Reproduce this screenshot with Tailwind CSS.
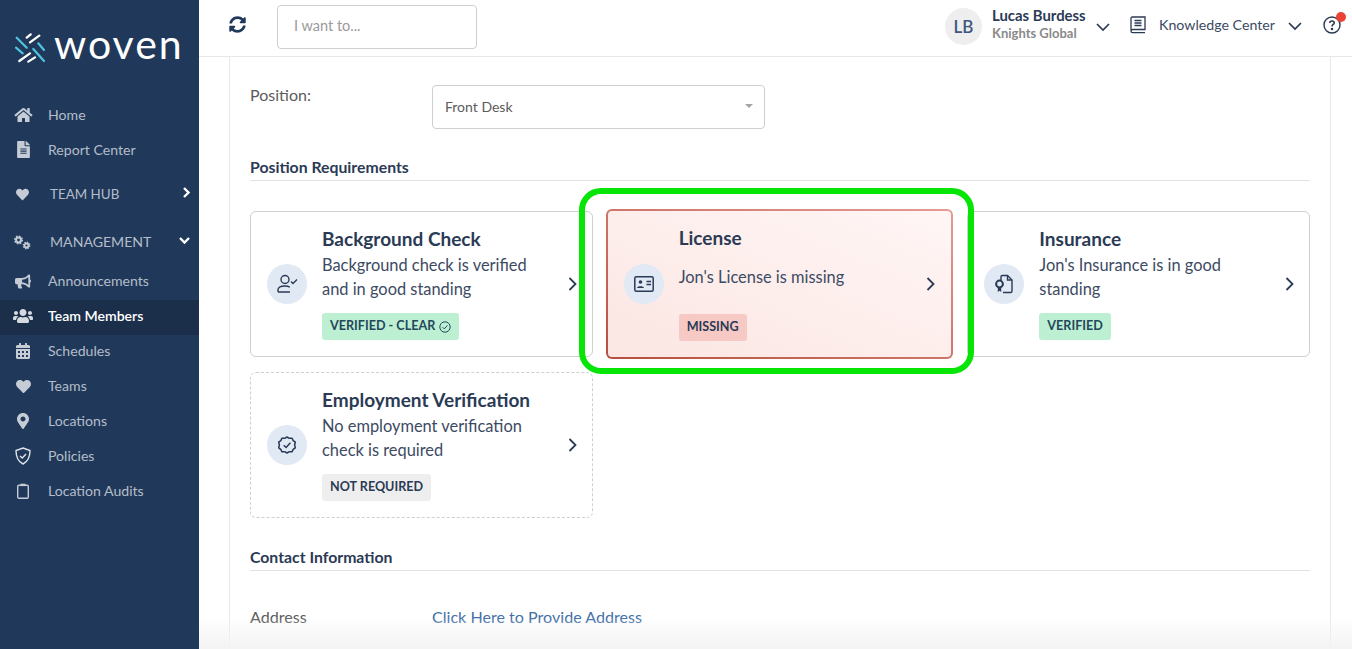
<!DOCTYPE html>
<html lang="en">
<head>
  <meta charset="utf-8"/>
  <meta name="viewport" content="width=device-width, initial-scale=1.0"/>
  <title>Team Member</title>
  <script src="https://cdn.jsdelivr.net/npm/@tailwindcss/browser@4"></script>
</head>
<body class="h-screen overflow-hidden bg-white font-['Lato','Noto_Sans',sans-serif] text-[#2b3a55]">
<div class="relative flex h-[649px] overflow-hidden">

  <!-- Sidebar -->
  <aside class="w-[199px] shrink-0 bg-[#20395a] text-[14.1px] text-[#b4bdca]">
    <div class="flex h-[97px] items-start pl-[15px] pt-[33px]">
      <svg class="h-[30px] w-[30px] shrink-0" viewBox="0 0 30 30" fill="none" stroke-width="2.2" stroke-linecap="round">
        <path d="M1.7 4.7 L11.7 14.7 M1 14.7 L7.7 20.3 M18.3 16 L29 28 M23.3 10.3 L29 17" stroke="#4fc3e0"/>
        <path d="M11.7 4.7 L15.7 1.3 M15 9.3 L24.3 2.7 M4.3 28 L15 20.3 M13.3 28.7 L20 24.3" stroke="#ffffff"/>
      </svg>
      <span class="ml-[9px] mt-[-8px] text-[41px] font-normal leading-[38px] tracking-[2px] text-white">woven</span>
    </div>
    <nav>
      <a class="flex h-[35px] items-center pl-[14px]"><svg class="h-[16px] w-[19px]" viewBox="0 0 576 512" fill="#c5ccd6"><path d="M280.37 148.26L96 300.11V464a16 16 0 0 0 16 16l112.06-.29a16 16 0 0 0 15.92-16V368a16 16 0 0 1 16-16h64a16 16 0 0 1 16 16v95.64a16 16 0 0 0 16 16.05L464 480a16 16 0 0 0 16-16V300L295.67 148.26a12.19 12.19 0 0 0-15.3 0zM571.6 251.47L488 182.56V44.05a12 12 0 0 0-12-12h-56a12 12 0 0 0-12 12v72.61L318.47 43a48 48 0 0 0-61 0L4.34 251.47a12 12 0 0 0-1.6 16.9l25.5 31A12 12 0 0 0 45.15 301l235.22-193.74a12.19 12.19 0 0 1 15.3 0L530.9 301a12 12 0 0 0 16.9-1.6l25.5-31a12 12 0 0 0-1.7-16.93z"/></svg><span class="ml-[15px]">Home</span></a>
      <a class="flex h-[35px] items-center pl-[17px]"><svg class="h-[17px] w-[13px]" viewBox="0 0 384 512" fill="#c5ccd6"><path d="M224 136V0H24C10.7 0 0 10.7 0 24v464c0 13.3 10.7 24 24 24h336c13.3 0 24-10.7 24-24V160H248c-13.2 0-24-10.8-24-24zm64 236c0 6.6-5.4 12-12 12H108c-6.6 0-12-5.4-12-12v-8c0-6.6 5.4-12 12-12h168c6.6 0 12 5.4 12 12v8zm0-64c0 6.6-5.4 12-12 12H108c-6.6 0-12-5.4-12-12v-8c0-6.6 5.4-12 12-12h168c6.6 0 12 5.4 12 12v8zm0-72v8c0 6.6-5.4 12-12 12H108c-6.6 0-12-5.4-12-12v-8c0-6.6 5.4-12 12-12h168c6.6 0 12 5.4 12 12zm96-114.1v6.1H256V0h6.1c6.4 0 12.5 2.5 17 7l97.9 98c4.5 4.5 7 10.6 7 16.9z"/></svg><span class="ml-[18px]">Report Center</span></a>

      <a class="mt-[3px] flex h-[48px] items-center pl-[15px] pr-[8px]"><svg class="h-[13px] w-[15px]" viewBox="0 0 512 512" fill="#c5ccd6"><path d="M462.3 62.6C407.5 15.9 326 24.3 275.7 76.2L256 96.5l-19.7-20.3C186.1 24.3 104.5 15.9 49.7 62.6c-62.8 53.6-66.1 149.8-9.9 207.9l193.5 199.8c12.5 12.9 32.8 12.9 45.3 0l193.5-199.8c56.3-58.1 53-154.3-9.8-207.9z"/></svg><span class="ml-[20px] text-[13.4px]">TEAM HUB</span><svg class="ml-auto mt-[-4px] h-[11px] w-[9px]" viewBox="0 0 9 11" fill="none" stroke="#ffffff" stroke-width="2.4"><path d="M2 1 L6.5 5.5 L2 10"/></svg></a>
      <a class="flex h-[48px] items-center pl-[13px] pr-[9px]"><svg class="h-[15px] w-[18px]" viewBox="0 0 18 15" fill="none" stroke="#c5ccd6"><circle cx="5.5" cy="5" r="2.4" stroke-width="2"/><circle cx="5.5" cy="5" r="3.7" stroke-width="1.6" stroke-dasharray="1.6 1.3"/><circle cx="13.5" cy="10.5" r="2" stroke-width="1.8"/><circle cx="13.5" cy="10.5" r="3.2" stroke-width="1.4" stroke-dasharray="1.4 1.1"/></svg><span class="ml-[19px]">MANAGEMENT</span><svg class="ml-auto mt-[-4px] h-[9px] w-[11px]" viewBox="0 0 11 9" fill="none" stroke="#ffffff" stroke-width="2.4"><path d="M1 2 L5.5 6.5 L10 2"/></svg></a>

      <a class="mt-[-1px] flex h-[35px] items-center pb-[3px] pl-[15px]"><svg class="h-[15px] w-[16px]" viewBox="0 0 576 512" fill="#c5ccd6"><path d="M576 240c0-23.63-12.95-44.04-32-55.12V32.01C544 23.26 537.02 0 512 0c-7.12 0-14.19 2.38-19.98 7.02l-85.03 68.03C364.28 109.19 310.66 128 256 128H64c-35.35 0-64 28.65-64 64v96c0 35.35 28.65 64 64 64h33.7c-1.39 10.48-2.18 21.14-2.18 32 0 39.77 9.26 77.35 25.56 110.94 5.19 10.69 16.52 17.06 28.4 17.06h74.28c26.05 0 41.69-29.84 25.9-50.56-16.4-21.52-26.15-48.36-26.15-77.44 0-11.11 1.62-21.79 4.41-32H256c54.66 0 108.28 18.81 150.98 52.95l85.03 68.03a32.023 32.023 0 0 0 19.98 7.02c24.92 0 32-22.78 32-32V295.13C563.05 284.04 576 263.63 576 240zm-96 141.42l-33.05-26.44C392.95 311.78 325.12 288 256 288v-96c69.12 0 136.95-23.78 190.95-66.98L480 98.58v282.84z"/></svg><span class="ml-[17px]">Announcements</span></a>
      <a class="flex h-[35px] items-center bg-[#1b2f4b] pb-[3px] pl-[13px] font-semibold text-white"><svg class="h-[16px] w-[20px]" viewBox="0 0 640 512" fill="#d5dae1"><path d="M96 224c35.3 0 64-28.7 64-64s-28.7-64-64-64-64 28.7-64 64 28.7 64 64 64zm448 0c35.3 0 64-28.7 64-64s-28.7-64-64-64-64 28.7-64 64 28.7 64 64 64zm32 32h-64c-17.6 0-33.5 7.1-45.1 18.6 40.3 22.1 68.9 62 75.1 109.4h66c17.7 0 32-14.3 32-32v-32c0-35.3-28.7-64-64-64zm-256 0c61.9 0 112-50.1 112-112S381.9 32 320 32 208 82.1 208 144s50.1 112 112 112zm76.8 32h-8.3c-20.8 10-43.9 16-68.5 16s-47.6-6-68.5-16h-8.3C179.6 288 128 339.6 128 403.2V432c0 26.5 21.5 48 48 48h288c26.5 0 48-21.5 48-48v-28.8c0-63.6-51.6-115.2-115.2-115.2zm-223.7-13.4C161.5 263.1 145.6 256 128 256H64c-35.3 0-64 28.7-64 64v32c0 17.7 14.3 32 32 32h65.9c6.3-47.4 34.9-87.3 75.2-109.4z"/></svg><span class="ml-[15px]">Team Members</span></a>
      <a class="flex h-[35px] items-center pb-[3px] pl-[16px]"><svg class="h-[16px] w-[14px]" viewBox="0 0 448 512" fill="#c5ccd6"><path d="M0 464c0 26.5 21.5 48 48 48h352c26.5 0 48-21.5 48-48V192H0v272zm320-196c0-6.6 5.4-12 12-12h40c6.6 0 12 5.4 12 12v40c0 6.6-5.4 12-12 12h-40c-6.6 0-12-5.4-12-12v-40zm0 128c0-6.6 5.4-12 12-12h40c6.6 0 12 5.4 12 12v40c0 6.6-5.4 12-12 12h-40c-6.6 0-12-5.4-12-12v-40zM192 268c0-6.6 5.4-12 12-12h40c6.6 0 12 5.4 12 12v40c0 6.6-5.4 12-12 12h-40c-6.6 0-12-5.4-12-12v-40zm0 128c0-6.6 5.4-12 12-12h40c6.6 0 12 5.4 12 12v40c0 6.6-5.4 12-12 12h-40c-6.6 0-12-5.4-12-12v-40zM64 268c0-6.6 5.4-12 12-12h40c6.6 0 12 5.4 12 12v40c0 6.6-5.4 12-12 12H76c-6.6 0-12-5.4-12-12v-40zm0 128c0-6.6 5.4-12 12-12h40c6.6 0 12 5.4 12 12v40c0 6.6-5.4 12-12 12H76c-6.6 0-12-5.4-12-12v-40zM400 64h-48V16c0-8.8-7.2-16-16-16h-32c-8.8 0-16 7.2-16 16v48H160V16c0-8.8-7.2-16-16-16h-32c-8.8 0-16 7.2-16 16v48H48C21.5 64 0 85.5 0 112v48h448v-48c0-26.5-21.5-48-48-48z"/></svg><span class="ml-[18px]">Schedules</span></a>
      <a class="flex h-[35px] items-center pb-[3px] pl-[15px]"><svg class="h-[15px] w-[17px]" viewBox="0 0 512 512" fill="#c5ccd6"><path d="M462.3 62.6C407.5 15.9 326 24.3 275.7 76.2L256 96.5l-19.7-20.3C186.1 24.3 104.5 15.9 49.7 62.6c-62.8 53.6-66.1 149.8-9.9 207.9l193.5 199.8c12.5 12.9 32.8 12.9 45.3 0l193.5-199.8c56.3-58.1 53-154.3-9.8-207.9z"/></svg><span class="ml-[16px]">Teams</span></a>
      <a class="flex h-[35px] items-center pb-[3px] pl-[17px]"><svg class="h-[16px] w-[12px]" viewBox="0 0 384 512" fill="#c5ccd6"><path d="M172.268 501.67C26.97 291.031 0 269.413 0 192 0 85.961 85.961 0 192 0s192 85.961 192 192c0 77.413-26.97 99.031-172.268 309.67-9.535 13.774-29.93 13.773-39.464 0zM192 272c44.183 0 80-35.817 80-80s-35.817-80-80-80-80 35.817-80 80 35.817 80 80 80z"/></svg><span class="ml-[19px]">Locations</span></a>
      <a class="flex h-[35px] items-center pb-[3px] pl-[15px]"><svg class="h-[18px] w-[16px]" viewBox="0 0 16 18" fill="none" stroke="#dfe3e8" stroke-width="1.4"><path d="M8 1 L15 3.5 C15 9 13 14.5 8 17 C3 14.5 1 9 1 3.5 Z"/><path d="M5 9 L7.3 11 L11 7"/></svg><span class="ml-[17px]">Policies</span></a>
      <a class="flex h-[35px] items-center pb-[3px] pl-[17px]"><svg class="h-[16px] w-[12px]" viewBox="0 0 12 16" fill="none" stroke="#c5ccd6" stroke-width="1.4"><rect x="0.7" y="2.2" width="10.6" height="13" rx="1.2"/><rect x="3.5" y="0.7" width="5" height="2.4" fill="#c5ccd6" stroke="none"/></svg><span class="ml-[19px]">Location Audits</span></a>
    </nav>
  </aside>

  <div class="flex min-w-0 flex-1 flex-col">
    <!-- Top bar -->
    <header class="flex h-[57px] shrink-0 items-start border-b border-[#e8e8e8] bg-white">
      <svg class="ml-[30px] mt-[16px] h-[17px] w-[17px]" viewBox="0 0 512 512" fill="#20395a"><path d="M370.72 133.28C339.458 104.008 298.888 87.962 255.848 88c-77.458.068-144.328 53.178-162.791 126.85-1.344 5.363-6.122 9.15-11.651 9.15H24.103c-7.498 0-13.194-6.807-11.807-14.176C33.933 94.924 134.813 8 256 8c66.448 0 126.791 26.136 171.315 68.685L463.03 40.97C478.149 25.851 504 36.559 504 57.941V192c0 13.255-10.745 24-24 24H345.941c-21.382 0-32.09-25.851-16.971-40.971l41.75-41.749zM32 296h134.059c21.382 0 32.09 25.851 16.971 40.971l-41.75 41.75c31.262 29.273 71.835 45.319 114.876 45.28 77.418-.07 144.315-53.144 162.787-126.849 1.344-5.363 6.122-9.15 11.651-9.15h57.304c7.498 0 13.194 6.807 11.807 14.176C478.067 417.076 377.187 504 256 504c-66.448 0-126.791-26.136-171.315-68.685L48.97 471.03C33.851 486.149 8 475.441 8 454.059V320c0-13.255 10.745-24 24-24z"/></svg>
      <div class="ml-[31px] mt-[5px] flex h-[44px] w-[200px] items-center rounded-[4px] border border-[#cfcfcf] pb-[2px] pl-[16px] text-[14.5px] text-[#9a9a9a]">I want to...</div>

      <div class="ml-[468px] mt-[8px] flex h-[37px] w-[37px] items-center justify-center rounded-full bg-[#eeeeee] text-[17px] font-semibold text-[#3f5680]">LB</div>
      <div class="ml-[10px] mt-[8px] w-[96px] leading-none">
        <div class="whitespace-nowrap text-[14.9px] font-bold text-[#2b3a55]">Lucas Burdess</div>
        <div class="mt-[4px] text-[13px] font-bold text-[#8a8a8a]">Knights Global</div>
      </div>
      <svg class="ml-[8px] mt-[22px] h-[10px] w-[14px]" viewBox="0 0 14 10" fill="none" stroke="#2b3a55" stroke-width="1.7"><path d="M1 2 L7 8 L13 2"/></svg>
      <svg class="ml-[20px] mt-[16px] h-[18px] w-[16px]" viewBox="0 0 16 18" fill="none" stroke="#2b3a55" stroke-width="1.3"><path d="M1 15 V2.2 C1 1.5 1.5 1 2.2 1 H15 V13.5 H2.6 C1.7 13.5 1 14.2 1 15 C1 15.9 1.7 16.7 2.6 16.7 H15"/><path d="M4.5 4.5 H11.5 M4.5 7 H11.5 M4.5 9.5 H11.5"/></svg>
      <span class="ml-[13px] mt-[16px] whitespace-nowrap text-[14.2px] leading-[18px] text-[#3c4a63]">Knowledge Center</span>
      <svg class="ml-[13px] mt-[21px] h-[10px] w-[14px]" viewBox="0 0 14 10" fill="none" stroke="#2b3a55" stroke-width="1.7"><path d="M1 2 L7 8 L13 2"/></svg>
      <div class="relative ml-[21px] mt-[16px] h-[18px] w-[18px]">
        <svg class="h-[18px] w-[18px]" viewBox="0 0 18 18" fill="none" stroke="#2b3a55" stroke-width="1.4"><circle cx="9" cy="9" r="8"/><path d="M6.8 7 C6.8 5.6 7.8 5 9 5 C10.3 5 11.2 5.8 11.2 6.9 C11.2 8.5 9 8.5 9 10.4" stroke-width="1.6"/><circle cx="9" cy="13" r="0.6" fill="#2b3a55"/></svg>
        <span class="absolute right-[-5px] top-[-4px] h-[10px] w-[10px] rounded-full bg-[#ea4335]"></span>
      </div>
    </header>

    <!-- Panel -->
    <main class="ml-[30px] w-[1102px] flex-1 overflow-hidden border-x border-[#e8e8e8] px-[20px] pt-[28px]">
      <div class="flex items-start">
        <label class="w-[182px] text-[16px] leading-[20px] text-[#5b5b5b]">Position:</label>
        <div class="flex h-[44px] w-[333px] items-center rounded-[4px] border border-[#cfcfcf] pb-[2px] pl-[12px] pr-[11px] text-[14px] text-[#5b5b5b]">
          Front Desk
          <span class="ml-auto h-0 w-0 border-x-[4px] border-t-[4px] border-x-transparent border-t-[#a5a5a5]"></span>
        </div>
      </div>

      <h2 class="mt-[30px] h-[22px] border-b border-[#e3e3e3] text-[15.8px] font-bold leading-[16px] text-[#2b3a55]">Position Requirements</h2>

      <div class="mt-[30px] grid grid-cols-3 gap-x-[16px] gap-y-[15px]">
        <div class="flex h-[146px] items-center rounded-[6px] border border-[#cfcfcf] pl-[16px] pr-[15px]">
          <span class="flex h-[40px] w-[40px] shrink-0 items-center justify-center rounded-full bg-[#e1e9f5]">
            <svg class="h-[22px] w-[22px]" viewBox="0 0 22 22" fill="none" stroke="#2b3a55" stroke-width="1.4"><circle cx="9" cy="6.5" r="4"/><path d="M2 19 V17 C2 14.5 5 13 9 13 C11 13 12.5 13.4 13.8 14.2 M2 19 H14"/><path d="M15 8.5 L17 10.5 L21 6.5"/></svg>
          </span>
          <div class="ml-[15px] min-w-0 flex-1">
            <h3 class="text-[19px] font-bold leading-[22px]">Background Check</h3>
            <p class="mt-[3px] max-w-[225px] text-[16.4px] leading-[23.5px] text-[#3c4a63]">Background check is verified and in good standing</p>
            <span class="mt-[13px] inline-flex h-[27px] items-center gap-[4px] rounded-[3px] bg-[#bdf0d3] px-[8px] text-[12.6px] font-bold text-[#24475a]">VERIFIED - CLEAR <svg class="h-[12px] w-[12px]" viewBox="0 0 12 12" fill="none" stroke="#24475a" stroke-width="1"><circle cx="6" cy="6" r="5.2"/><path d="M3.6 6.2 L5.3 7.9 L8.4 4.4"/></svg></span>
          </div>
          <svg class="ml-[10px] h-[14px] w-[9px] shrink-0" viewBox="0 0 9 14" fill="none" stroke="#2b3a55" stroke-width="1.8"><path d="M1.5 1 L7.5 7 L1.5 13"/></svg>
        </div>

        <div class="my-[-2px] ml-[-3px] mr-[-2px] h-[150px] rounded-[6px] bg-linear-to-tr from-[#b54f42] to-[#e59c92] p-[2px]">
          <div class="flex h-full items-center rounded-[4px] bg-linear-to-tr from-[#fbe6e3] to-[#fff6f5] pl-[16px] pr-[16px]">
            <span class="flex h-[40px] w-[40px] shrink-0 items-center justify-center rounded-full bg-[#e1e9f5]">
              <svg class="h-[16px] w-[20px]" viewBox="0 0 20 16" fill="none" stroke="#2b3a55" stroke-width="1.5"><rect x="0.8" y="0.8" width="18.4" height="14.4" rx="1.5"/><circle cx="6.5" cy="6" r="1.8" fill="#2b3a55" stroke="none"/><path d="M3 12 C3 9.8 10 9.8 10 12 Z" fill="#2b3a55" stroke="none"/><path d="M12.5 5.5 H17 M12.5 8.5 H17" stroke-width="1.3"/></svg>
            </span>
            <div class="ml-[15px] flex h-full min-w-0 flex-1 flex-col pb-[16px] pt-[16px]">
              <h3 class="text-[19px] font-bold leading-[22px]">License</h3>
              <p class="mt-[16px] text-[16.4px] leading-[23.5px] text-[#3c4a63]">Jon's License is missing</p>
              <span class="mt-auto inline-flex h-[27px] w-fit items-center rounded-[3px] bg-[#f6c9c4] px-[8px] text-[12.6px] font-bold">MISSING</span>
            </div>
            <svg class="ml-[10px] h-[14px] w-[9px] shrink-0" viewBox="0 0 9 14" fill="none" stroke="#2b3a55" stroke-width="1.8"><path d="M1.5 1 L7.5 7 L1.5 13"/></svg>
          </div>
        </div>

        <div class="flex h-[146px] items-center rounded-[6px] border border-[#cfcfcf] pl-[16px] pr-[15px]">
          <span class="flex h-[40px] w-[40px] shrink-0 items-center justify-center rounded-full bg-[#e1e9f5]">
            <svg class="h-[20px] w-[20px]" viewBox="0 0 20 20" fill="none" stroke="#2b3a55" stroke-width="1.4"><path d="M7 6 V2.8 C7 2 7.6 1.5 8.3 1.5 H13.5 L18 6 V17 C18 17.8 17.4 18.5 16.6 18.5 H9"/><path d="M13.5 1.5 V6 H18"/><circle cx="5.5" cy="10" r="3.4" stroke-width="2"/><path d="M3.8 13 V18 L5.5 16.8 L7.2 18 V13" fill="#2b3a55" stroke="none"/></svg>
          </span>
          <div class="ml-[15px] min-w-0 flex-1">
            <h3 class="text-[19px] font-bold leading-[22px]">Insurance</h3>
            <p class="mt-[3px] text-[16.4px] leading-[23.5px] text-[#3c4a63]">Jon's Insurance is in good standing</p>
            <span class="mt-[13px] inline-flex h-[27px] items-center rounded-[3px] bg-[#bdf0d3] px-[8px] text-[12.6px] font-bold text-[#24475a]">VERIFIED</span>
          </div>
          <svg class="ml-[10px] h-[14px] w-[9px] shrink-0" viewBox="0 0 9 14" fill="none" stroke="#2b3a55" stroke-width="1.8"><path d="M1.5 1 L7.5 7 L1.5 13"/></svg>
        </div>

        <div class="flex h-[146px] items-center rounded-[6px] border border-dashed border-[#cfcfcf] pl-[16px] pr-[15px]">
          <span class="flex h-[40px] w-[40px] shrink-0 items-center justify-center rounded-full bg-[#e1e9f5]">
            <svg class="h-[20px] w-[20px]" viewBox="0 0 20 20" fill="none" stroke="#2b3a55" stroke-width="1.5"><path d="M10 2 L12.3 3.3 L15 3.2 L16.2 5.6 L18.3 7.2 L17.6 10 L18.3 12.8 L16.2 14.4 L15 16.8 L12.3 16.7 L10 18 L7.7 16.7 L5 16.8 L3.8 14.4 L1.7 12.8 L2.4 10 L1.7 7.2 L3.8 5.6 L5 3.2 L7.7 3.3 Z" stroke-linejoin="round"/><path d="M6.7 10.2 L9.1 12.5 L13.4 7.8"/></svg>
          </span>
          <div class="ml-[15px] min-w-0 flex-1">
            <h3 class="text-[19px] font-bold leading-[22px]">Employment Verification</h3>
            <p class="mt-[3px] text-[16.4px] leading-[23.5px] text-[#3c4a63]">No employment verification check is required</p>
            <span class="mt-[13px] inline-flex h-[27px] items-center rounded-[3px] bg-[#eeeeee] px-[8px] text-[12.6px] font-bold">NOT REQUIRED</span>
          </div>
          <svg class="ml-[10px] h-[14px] w-[9px] shrink-0" viewBox="0 0 9 14" fill="none" stroke="#2b3a55" stroke-width="1.8"><path d="M1.5 1 L7.5 7 L1.5 13"/></svg>
        </div>
      </div>

      <h2 class="mt-[31px] h-[22px] border-b border-[#e3e3e3] text-[15.8px] font-bold leading-[16px] text-[#2b3a55]">Contact Information</h2>

      <div class="mt-[36px] flex text-[16.1px] leading-[20px]">
        <span class="w-[182px] text-[#5b5b5b]">Address</span>
        <a class="text-[#3f6fa8]">Click Here to Provide Address</a>
      </div>
    </main>
  </div>

  <!-- Annotation ring over the License card -->
  <div class="pointer-events-none absolute left-[579px] top-[188px] h-[186px] w-[395px] rounded-[22px] border-[6px] border-[#07e507]"></div>
  <!-- Bottom fade -->
  <div class="pointer-events-none absolute bottom-0 left-[199px] right-0 h-[32px] bg-linear-to-b from-white/0 to-[#f3f3f3]"></div>
</div>
</body>
</html>
